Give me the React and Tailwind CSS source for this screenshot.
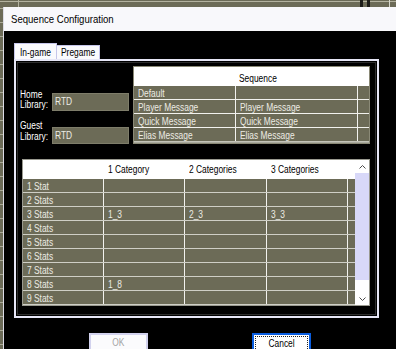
import React from "react";

const F = "font-['Liberation_Sans',Arial,sans-serif]";

function S({ children, center = false }) {
  return (
    <span className={`inline-block whitespace-nowrap scale-x-[0.84] ${center ? "origin-center" : "origin-left"}`}>
      {children}
    </span>
  );
}

function TopSeg({ className = "" }) {
  return (
    <div className={`h-full ${className}`}>
      <div className="mt-[1px] h-px bg-[#b3b29f]" />
    </div>
  );
}

function Chev({ up }) {
  return (
    <svg width="7" height="4" viewBox="0 0 7 4" className="block">
      <polyline
        points={up ? "0.5,3.5 3.5,0.5 6.5,3.5" : "0.5,0.5 3.5,3.5 6.5,0.5"}
        fill="none"
        stroke="#4a4a4a"
        strokeWidth="1"
      />
    </svg>
  );
}

const stats = ["1 Stat", "2 Stats", "3 Stats", "4 Stats", "5 Stats", "6 Stats", "7 Stats", "8 Stats", "9 Stats"];
const vals = { 2: ["1_3", "2_3", "3_3"], 7: ["1_8", "", ""] };
const seqRows = [
  ["Default", ""],
  ["Player Message", "Player Message"],
  ["Quick Message", "Quick Message"],
  ["Elias Message", "Elias Message"],
];

export default function App() {
  const cell = "border-r border-[#f2f2ee] pl-[4px] pt-[2px] leading-[12px] whitespace-nowrap overflow-hidden";
  return (
    <div className={`w-[396px] h-[349px] overflow-hidden flex flex-col bg-[#6c6b57] ${F}`}>
      {/* background app top strip */}
      <div className="h-[7px] flex shrink-0">
        <TopSeg className="w-[19px] border-r border-[#b3b29f]" />
        <TopSeg className="flex-1" />
        <div className="w-[3px] h-full bg-[#1c1c18]" />
        <TopSeg className="w-[4px]" />
        <div className="w-[3px] h-full bg-[#1c1c18]" />
        <TopSeg className="w-[20px] border-r border-[#d8d8cc]" />
        <TopSeg className="w-[6px]" />
      </div>
      <div className="flex flex-1 min-h-0">
        {/* background app left strip */}
        <div className="w-[3px] shrink-0 flex flex-col pt-[1px]">
          {Array.from({ length: 25 }).map((_, i) => (
            <div key={i} className="h-[14px] shrink-0 border-t border-[#aaa996]" />
          ))}
        </div>
        {/* dialog */}
        <div className="flex-1 min-w-0 flex flex-col bg-black border-l border-[#dcdce6]">
          <div className="h-[24px] shrink-0 bg-[#f8f8fb] flex items-center pl-[7px] text-[11px] text-black">
            <span className="inline-block whitespace-nowrap origin-left scale-x-[0.87]">Sequence Configuration</span>
          </div>
          <div className="pl-[10px] pt-[12px] flex flex-col">
            {/* tabs */}
            <div className="flex items-end h-[16px]">
              <div className="w-[43px] h-[16px] bg-[#fafafd] border-t border-l border-r border-[#c6c6ea] text-[10px] text-black leading-[12px] pt-[3px] pl-[5px] overflow-hidden">
                <S>In-game</S>
              </div>
              <div className="w-[43px] h-[14px] bg-[#fafafd] border-t border-r border-[#c6c6ea] text-[10px] text-black leading-[12px] pt-[1px] pl-[4px] overflow-hidden">
                <S>Pregame</S>
              </div>
            </div>
            {/* panel */}
            <div className="w-[365px] h-[259px] border-2 border-[#e6e6f6] p-px">
              <div className="h-full border border-[#2e2e2e] pl-[2px] pr-[5px] pt-[3px] flex flex-col">
                {/* top section */}
                <div className="flex justify-between">
                  <div className="flex flex-col">
                    <div className="flex mt-[24px]">
                      <div className="w-[32px] text-[10px] leading-[10px] text-white">
                        <div><S>Home</S></div>
                        <div><S>Library:</S></div>
                      </div>
                      <div className="mt-[3px] w-[77px] h-[18px] bg-[#6c6b57] border border-[#7e7d6a] pl-[2px] flex items-center text-[10px] leading-[12px] text-[#eeeee6]">
                        <S>RTD</S>
                      </div>
                    </div>
                    <div className="flex mt-[9px]">
                      <div className="w-[32px] text-[10px] leading-[11px] text-white">
                        <div><S>Guest</S></div>
                        <div><S>Library:</S></div>
                      </div>
                      <div className="mt-[7px] w-[77px] h-[17px] bg-[#6c6b57] border border-[#7e7d6a] pl-[2px] flex items-center text-[10px] leading-[12px] text-[#eeeee6]">
                        <S>RTD</S>
                      </div>
                    </div>
                  </div>
                  {/* sequence table */}
                  <div className="w-[237px] border border-[#8a8976] flex flex-col text-[10px]">
                    <div className="h-[19px] bg-white flex items-center pt-[4px] pl-[105px] leading-[12px] text-black">
                      <S>Sequence</S>
                    </div>
                    {seqRows.map((r, i) => (
                      <div
                        key={i}
                        className={`flex h-[14px] bg-[#6c6b57] text-[#ececE4] border-b ${i === 3 ? "border-[#c4c4b8]" : "border-[#f2f2ee]"}`}
                      >
                        <div className={`w-[102px] ${cell}`}><S>{r[0]}</S></div>
                        <div className={`w-[122px] ${cell}`}><S>{r[1]}</S></div>
                        <div className="flex-1" />
                      </div>
                    ))}
                    <div className="h-px bg-[#a8a89c]" />
                  </div>
                </div>
                {/* stats grid */}
                <div className="mt-[15px] ml-[2px] h-[147px] border border-[#9a9a90] flex text-[10px]">
                  <div className="flex-1 flex flex-col">
                    <div className="h-[19px] bg-white flex items-center leading-[12px] text-black">
                      <div className="w-[81px]" />
                      <div className="w-[81px] pl-[4px]"><S>1 Category</S></div>
                      <div className="w-[82px] pl-[4px]"><S>2 Categories</S></div>
                      <div className="w-[81px] pl-[4px]"><S>3 Categories</S></div>
                    </div>
                    {stats.map((s, i) => {
                      const v = vals[i] || ["", "", ""];
                      return (
                        <div key={s} className="flex h-[14px] bg-[#6c6b57] text-[#ececE4] border-b border-[#cfcfc6]">
                          <div className={`w-[81px] ${cell}`}><S>{s}</S></div>
                          <div className={`w-[81px] ${cell}`}><S>{v[0]}</S></div>
                          <div className={`w-[82px] ${cell}`}><S>{v[1]}</S></div>
                          <div className={`w-[81px] ${cell}`}><S>{v[2]}</S></div>
                          <div className="flex-1" />
                        </div>
                      );
                    })}
                  </div>
                  {/* scrollbar */}
                  <div className="w-[14px] bg-white flex flex-col">
                    <div className="h-[13px] flex items-center justify-center">
                      <Chev up />
                    </div>
                    <div className="h-[107px] bg-[#d8d8f8]" />
                    <div className="flex-1 flex items-end justify-center pb-[4px]">
                      <Chev />
                    </div>
                  </div>
                </div>
              </div>
            </div>
            {/* buttons */}
            <div className="flex mt-[15px] ml-[75px] gap-[104px]">
              <div className="w-[59px] h-[23px] bg-[#fbfbfd] border-2 border-[#d2d2ee] flex justify-center pt-[2px] text-[10px] leading-[12px] text-[#a4a4a4]">
                <S center>OK</S>
              </div>
              <div className="w-[59px] h-[23px] bg-white border-2 border-[#0a5ee0] p-px">
                <div className="h-full border border-dotted border-[#222] flex justify-center pt-px text-[10px] leading-[12px] text-black">
                  <S center>Cancel</S>
                </div>
              </div>
            </div>
          </div>
        </div>
      </div>
    </div>
  );
}
